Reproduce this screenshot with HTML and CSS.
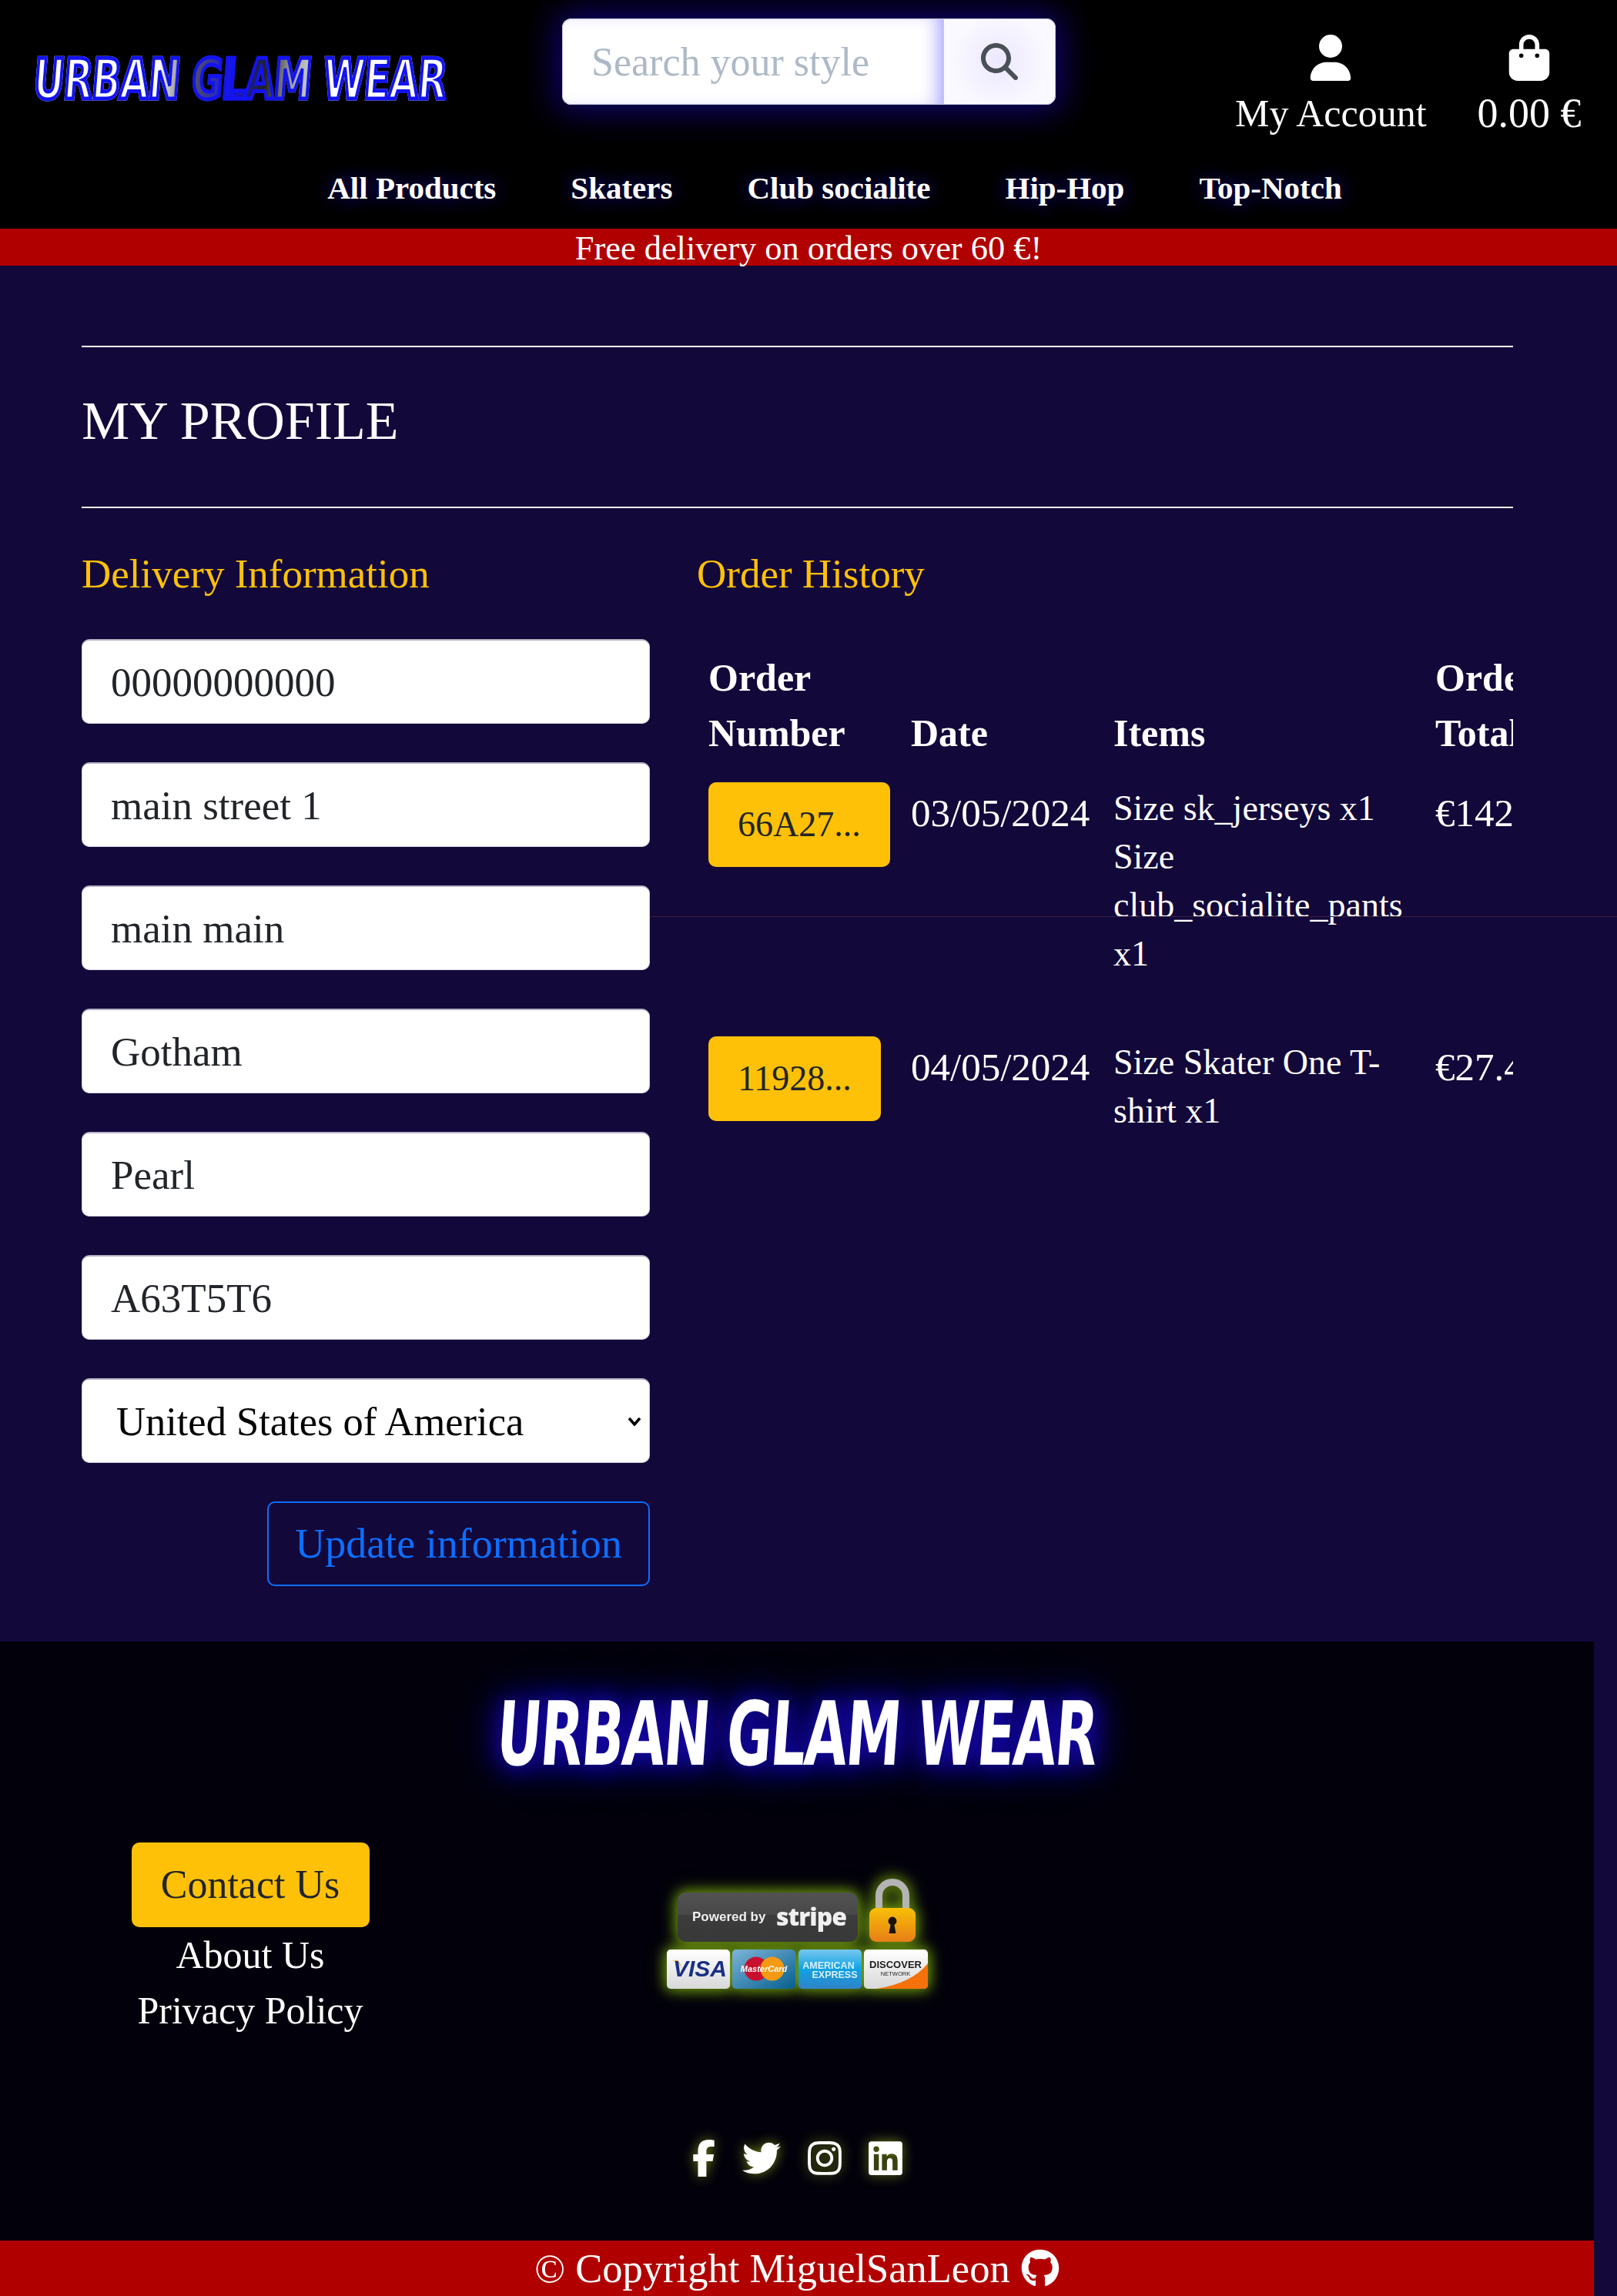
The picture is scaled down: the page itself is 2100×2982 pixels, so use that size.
FILE: index.html
```html
<!DOCTYPE html>
<html lang="en">
<head>
<meta charset="utf-8">
<title>Urban Glam Wear</title>
<link rel="stylesheet" href="styles.css">
</head>
<body>
<header class="site-header">
  <div class="top-row">
    <a class="logo" href="#"><span>URBAN GLAM WEAR</span></a>
    <form class="search">
      <input class="search-input" type="text" placeholder="Search your style">
      <button class="search-btn" type="button" aria-label="Search">
        <svg viewBox="0 0 512 512" width="48" height="48"><path fill="#495057" d="M416 208c0 45.900-14.900 88.300-40 122.700L502.600 457.400c12.500 12.500 12.500 32.800 0 45.300s-32.800 12.500-45.300 0L330.700 376c-34.400 25.200-76.800 40-122.700 40C93.100 416 0 322.900 0 208S93.100 0 208 0S416 93.100 416 208zM208 352a144 144 0 1 0 0-288 144 144 0 1 0 0 288z"/></svg>
      </button>
    </form>
    <div class="account">
      <a class="account-link" href="#">
        <svg viewBox="0 0 448 512" width="54" height="60"><path fill="#fff" d="M224 256A128 128 0 1 0 224 0a128 128 0 1 0 0 256zm-45.700 48C79.800 304 0 383.800 0 482.300C0 498.700 13.300 512 29.700 512H418.300c16.400 0 29.700-13.300 29.700-29.700C448 383.800 368.200 304 269.700 304H178.300z"/></svg>
        <span>My Account</span>
      </a>
      <a class="account-link bag-link" href="#">
        <svg viewBox="0 0 448 512" width="54" height="60"><path fill="#fff" d="M160 112c0-35.300 28.700-64 64-64s64 28.700 64 64v48H160V112zm-48 48H48c-26.500 0-48 21.500-48 48V416c0 53 43 96 96 96H352c53 0 96-43 96-96V208c0-26.500-21.500-48-48-48H336V112C336 50.100 285.900 0 224 0S112 50.100 112 112v48zm24 48a24 24 0 1 1 0 48 24 24 0 1 1 0-48zm152 24a24 24 0 1 1 48 0 24 24 0 1 1-48 0z"/></svg>
        <span>0.00 €</span>
      </a>
    </div>
  </div>
  <nav class="main-nav">
    <a href="#">All Products</a>
    <a href="#">Skaters</a>
    <a href="#">Club socialite</a>
    <a href="#">Hip-Hop</a>
    <a href="#">Top-Notch</a>
  </nav>
</header>
<div class="promo">Free delivery on orders over 60 €!</div>

<main class="profile">
  <div class="title-band">
    <h1>MY PROFILE</h1>
  </div>
  <div class="columns">
    <section class="delivery">
      <h2>Delivery Information</h2>
      <form class="delivery-form">
        <input class="field" type="text" value="00000000000">
        <input class="field" type="text" value="main street 1">
        <input class="field" type="text" value="main main">
        <input class="field" type="text" value="Gotham">
        <input class="field" type="text" value="Pearl">
        <input class="field" type="text" value="A63T5T6">
        <select class="field select-field"><option>United States of America</option></select>
        <button class="update-btn" type="button">Update information</button>
      </form>
    </section>
    <section class="history">
      <h2>Order History</h2>
      <div class="table-wrap">
        <table class="orders">
          <thead>
            <tr><th class="c1">Order Number</th><th class="c2">Date</th><th class="c3">Items</th><th class="c4">Order Total</th></tr>
          </thead>
          <tbody>
            <tr>
              <td><a class="order-btn" href="#">66A27...</a></td>
              <td class="date">03/05/2024</td>
              <td class="items">Size sk_jerseys x1<br>Size club_socialite_pants x1</td>
              <td class="date">€142.50</td>
            </tr>
            <tr>
              <td><a class="order-btn" href="#">11928...</a></td>
              <td class="date">04/05/2024</td>
              <td class="items">Size Skater One T-shirt x1</td>
              <td class="date">€27.40</td>
            </tr>
          </tbody>
        </table>
      </div>
    </section>
  </div>
  <div class="hairline"></div>
</main>

<footer class="site-footer">
  <div class="footer-logo"><span>URBAN GLAM WEAR</span></div>
  <div class="footer-mid">
    <div class="footer-links">
      <a class="contact-btn" href="#">Contact Us</a>
      <a href="#">About Us</a>
      <a href="#">Privacy Policy</a>
    </div>
    <svg class="stripe-badge" viewBox="0 0 340 144" width="340" height="144">
      <defs>
        <linearGradient id="gDark" x1="0" y1="0" x2="0" y2="1"><stop offset="0" stop-color="#525252"/><stop offset=".45" stop-color="#484848"/><stop offset=".46" stop-color="#3c3c3c"/><stop offset="1" stop-color="#383838"/></linearGradient>
        <linearGradient id="gLock" x1="0" y1="0" x2="0" y2="1"><stop offset="0" stop-color="#f8c007"/><stop offset="1" stop-color="#e77e17"/></linearGradient>
        <linearGradient id="gWhite" x1="0" y1="0" x2="0" y2="1"><stop offset="0" stop-color="#fff"/><stop offset="1" stop-color="#d8d8d8"/></linearGradient>
        <linearGradient id="gMc" x1="0" y1="0" x2="1" y2="1"><stop offset="0" stop-color="#7eb5d8"/><stop offset="1" stop-color="#05608f"/></linearGradient>
        <linearGradient id="gAm" x1="0" y1="0" x2="0" y2="1"><stop offset="0" stop-color="#76c8ef"/><stop offset=".5" stop-color="#10a2e2"/><stop offset="1" stop-color="#2f83c9"/></linearGradient>
      </defs>
      <rect x="14" y="18" width="234" height="64" rx="11" fill="url(#gDark)"/>
      <text x="33" y="55" class="st-pow">Powered by</text>
      <text x="142" y="61" class="st-brand">stripe</text>
      <path d="M275.500 42 V22 a17.500 17.500 0 0 1 35 0 V42" fill="none" stroke="#b4b4b4" stroke-width="9"/>
      <rect x="263" y="38" width="60" height="44" rx="9" fill="url(#gLock)"/>
      <path d="M288.500 71 l2-11 a5.500 5.500 0 1 1 5 0 l2 11 z" fill="#1a1208"/>
      <rect x="0" y="92" width="82" height="51" rx="5" fill="url(#gWhite)"/>
      <path d="M6 106 Q16 106 20 118 Q18 110 14 106 z" fill="#f2a51c"/>
      <text x="8" y="127" class="st-visa">VISA</text>
      <rect x="85" y="92" width="82" height="51" rx="5" fill="url(#gMc)"/>
      <circle cx="116" cy="117" r="15.500" fill="#c8102e"/>
      <circle cx="137" cy="117" r="15.500" fill="#f59a11"/>
      <text x="126" y="121" class="st-mc">MasterCard</text>
      <rect x="171" y="92" width="82" height="51" rx="5" fill="url(#gAm)"/>
      <text x="210" y="117" class="st-amex">AMERICAN</text>
      <text x="218" y="129" class="st-amex">EXPRESS</text>
      <rect x="256" y="92" width="83" height="51" rx="5" fill="url(#gWhite)"/>
      <path d="M272 143 Q318 136 339 110 V138 a5 5 0 0 1-5 5 z" fill="#f5720b"/>
      <text x="297" y="116" class="st-disc">DISCOVER</text>
      <text x="297" y="126" class="st-net">NETWORK</text>
    </svg>
  </div>
  <div class="socials">
    <svg class="s-f" viewBox="0 0 320 512"><path fill="#fff" d="M80 299.300V512H196V299.300h86.500l18-97.800H196V166.900c0-51.700 20.300-71.500 72.700-71.500c16.300 0 29.400 .4 37 1.200V7.900C291.400 4 256.400 0 236.200 0C129.300 0 80 50.500 80 159.400v42.100H14v97.800H80z"/></svg>
    <svg class="s-t" viewBox="0 0 512 512"><path fill="#fff" d="M459.370 151.716c.325 4.548 .325 9.097 .325 13.645 0 138.720-105.583 298.558-298.558 298.558-59.452 0-114.680-17.219-161.137-47.106 8.447 .974 16.568 1.299 25.340 1.299 49.055 0 94.213-16.568 130.274-44.832-46.132-.975-84.792-31.188-98.112-72.772 6.498 .974 12.995 1.624 19.818 1.624 9.421 0 18.843-1.300 27.614-3.573-48.081-9.747-84.143-51.980-84.143-102.985v-1.299c13.969 7.797 30.214 12.670 47.431 13.319-28.264-18.843-46.781-51.005-46.781-87.391 0-19.492 5.197-37.360 14.294-52.954 51.655 63.675 129.300 105.258 216.365 109.807-1.624-7.797-2.599-15.918-2.599-24.040 0-57.828 46.782-104.934 104.934-104.934 30.213 0 57.502 12.670 76.670 33.137 23.715-4.548 46.456-13.320 66.599-25.340-7.798 24.366-24.366 44.833-46.132 57.827 21.117-2.273 41.584-8.122 60.426-16.243-14.292 20.791-32.161 39.308-52.628 54.253z"/></svg>
    <svg class="s-i" viewBox="0 0 448 512"><path fill="#fff" d="M224.100 141c-63.600 0-114.900 51.300-114.900 114.900s51.300 114.900 114.900 114.900S339 319.500 339 255.900 287.700 141 224.100 141zm0 189.600c-41.100 0-74.700-33.500-74.700-74.700s33.500-74.700 74.700-74.700 74.700 33.500 74.700 74.700-33.600 74.700-74.700 74.700zm146.400-194.300c0 14.900-12 26.800-26.800 26.800-14.900 0-26.800-12-26.800-26.800s12-26.800 26.800-26.800 26.800 12 26.800 26.800zm76.100 27.200c-1.700-35.900-9.900-67.700-36.200-93.900-26.200-26.200-58-34.400-93.900-36.200-37-2.100-147.900-2.100-184.900 0-35.800 1.700-67.600 9.900-93.900 36.100s-34.400 58-36.200 93.900c-2.100 37-2.100 147.900 0 184.900 1.700 35.900 9.900 67.700 36.200 93.900s58 34.400 93.900 36.200c37 2.100 147.900 2.100 184.900 0 35.900-1.700 67.700-9.900 93.900-36.200 26.200-26.200 34.400-58 36.200-93.900 2.100-37 2.100-147.800 0-184.800zM398.800 388c-7.800 19.600-22.900 34.700-42.600 42.600-29.500 11.700-99.500 9-132.100 9s-102.700 2.600-132.100-9c-19.600-7.800-34.700-22.900-42.600-42.600-11.700-29.500-9-99.500-9-132.100s-2.600-102.700 9-132.100c7.800-19.600 22.900-34.700 42.600-42.600 29.500-11.700 99.500-9 132.100-9s102.700-2.600 132.100 9c19.600 7.800 34.700 22.900 42.600 42.600 11.700 29.500 9 99.500 9 132.100s2.700 102.700-9 132.100z"/></svg>
    <svg class="s-l" viewBox="0 0 448 512"><path fill="#fff" d="M416 32H31.900C14.300 32 0 46.500 0 64.300v383.400C0 465.500 14.300 480 31.900 480H416c17.600 0 32-14.500 32-32.300V64.300c0-17.800-14.400-32.300-32-32.300zM135.400 416H69V202.200h66.500V416zm-33.200-243c-21.300 0-38.500-17.300-38.500-38.500S80.900 96 102.200 96c21.200 0 38.500 17.300 38.500 38.500 0 21.300-17.200 38.500-38.500 38.500zm282.100 243h-66.400V312c0-24.800-.5-56.700-34.500-56.700-34.600 0-39.900 27-39.900 54.900V416h-66.400V202.200h63.700v29.200h.9c8.900-16.800 30.600-34.500 62.900-34.500 67.200 0 79.700 44.300 79.700 101.900V416z"/></svg>
  </div>
  <div class="copyright">
    <span>© Copyright MiguelSanLeon</span>
    <svg viewBox="0 0 496 512" width="50" height="50"><path fill="#fff" d="M165.900 397.400c0 2-2.300 3.600-5.200 3.600-3.300 .3-5.600-1.300-5.600-3.600 0-2 2.300-3.600 5.200-3.600 3-.3 5.600 1.300 5.600 3.600zm-31.100-4.500c-.7 2 1.300 4.300 4.300 4.900 2.600 1 5.600 0 6.200-2s-1.300-4.300-4.300-5.200c-2.600-.7-5.500 .3-6.200 2.300zm44.200-1.700c-2.900 .7-4.900 2.600-4.600 4.900 .3 2 2.900 3.300 5.900 2.600 2.900-.7 4.900-2.600 4.600-4.600-.3-1.900-3-3.200-5.900-2.900zM244.800 8C106.100 8 0 113.300 0 252c0 110.900 69.800 205.800 169.500 239.200 12.800 2.300 17.300-5.600 17.300-12.100 0-6.200-.3-40.400-.3-61.400 0 0-70 15-84.700-29.800 0 0-11.400-29.100-27.800-36.600 0 0-22.900-15.700 1.600-15.400 0 0 24.900 2 38.600 25.800 21.900 38.600 58.600 27.500 72.900 20.900 2.300-16 8.800-27.100 16-33.700-55.900-6.200-112.300-14.300-112.300-110.500 0-27.500 7.600-41.300 23.600-58.900-2.600-6.500-11.100-33.300 2.600-67.900 20.900-6.500 69 27 69 27 20-5.600 41.500-8.500 62.800-8.500s42.800 2.900 62.800 8.500c0 0 48.100-33.600 69-27 13.700 34.700 5.200 61.400 2.600 67.900 16 17.700 25.800 31.500 25.800 58.900 0 96.500-58.900 104.200-114.800 110.500 9.200 7.900 17 22.900 17 46.400 0 33.700-.3 75.400-.3 83.600 0 6.500 4.600 14.400 17.300 12.100C428.200 457.800 496 362.900 496 252 496 113.300 383.500 8 244.800 8z"/></svg>
  </div>
</footer>
</body>
</html>
```
FILE: styles.css
```css
* { box-sizing: border-box; }
html, body { margin: 0; padding: 0; }
body {
  background: #13083a;
  color: #fff;
  font-family: "Liberation Serif", "Times New Roman", serif;
  font-size: 50px;
  line-height: 1.44;
  width: 2100px;
  overflow-x: hidden;
}
a { color: inherit; text-decoration: none; }

/* Header */
.site-header { background: #000; height: 297px; }
.top-row { display: flex; align-items: flex-start; height: 200px; }

.logo {
  display: block;
  flex: none;
  width: 620px;
  padding: 72px 0 0 44px;
  font-family: "DejaVu Sans", sans-serif;
  font-stretch: condensed;
  font-weight: 700;
  font-size: 58px;
  line-height: 62px;
  white-space: nowrap;
}
.logo span {
  display: inline-block;
  -webkit-text-stroke: 4px #1313f0;
  letter-spacing: -1px;
  transform-origin: left center;
  transform: scale(.94, 1.25) skewX(-6deg);
  background: linear-gradient(90deg, #fff 0 30%, #555 38%, #1313f0 48%, #222 56%, #999 62%, #fff 72%);
  -webkit-background-clip: text;
  background-clip: text;
  -webkit-text-fill-color: transparent;
}

.search {
  display: flex;
  flex: none;
  width: 641px;
  height: 112px;
  margin: 24px 0 0 110px;
  border-radius: 12px;
  box-shadow: 0 0 44px 8px #100070;
  background: #fff;
}
.search-input {
  flex: 1;
  min-width: 0;
  height: 112px;
  padding: 0 37px;
  border: 1px solid #c7c6e0;
  border-right: 0;
  border-radius: 12px 0 0 12px;
  font: 52px "Liberation Serif", serif;
  color: #000;
  background: #fff;
  box-shadow: inset -18px 0 26px -14px #9a94ff;
  outline: 0;
}
.search-input::placeholder { color: #adb9c6; opacity: 1; }
.search-btn {
  width: 146px;
  height: 112px;
  padding: 0;
  display: flex;
  align-items: center;
  justify-content: center;
  background: radial-gradient(circle, #ece8ff 0, #faf9ff 70%);
  border: 1px solid #c7c6e0;
  border-radius: 0 12px 12px 0;
}

.account { display: flex; margin-left: 233px; padding-top: 45px; gap: 66px; }
.account-link {
  display: flex;
  flex-direction: column;
  align-items: center;
  line-height: 60px;
  font-size: 50px;
  white-space: nowrap;
}
.account-link svg { margin-bottom: 12px; }
.bag-link { font-size: 54px; }

.main-nav {
  display: flex;
  justify-content: center;
  gap: 97px;
  padding-left: 68px;
  font-weight: 700;
  font-size: 41px;
  line-height: 60px;
  margin-top: 14px;
}
.main-nav a { text-shadow: 0 0 24px #1d0a9c; }

.promo {
  background: #b10000;
  height: 48px;
  text-align: center;
  font-size: 44.4px;
  line-height: 50px;
}

/* Profile */
.profile { height: 1787px; padding: 104px 135px 0 106px; position: relative; }
.title-band {
  height: 211px;
  border-top: 2px solid #fff;
  border-bottom: 2px solid #fff;
  display: flex;
  align-items: center;
}
h1 { margin: 0 0 16px 0; font-size: 70px; font-weight: 400; line-height: 1; }
.columns { display: flex; margin-top: 49px; gap: 61px; }
h2 {
  margin: 0;
  color: #ffc107;
  font-size: 53px;
  font-weight: 400;
  line-height: 72px;
}
.delivery { width: 738px; flex: none; }
.delivery-form { display: flex; flex-direction: column; gap: 50px; margin-top: 49px; }
.field {
  width: 100%;
  height: 110px;
  padding: 0 37px;
  background: #fff;
  color: #212529;
  border: 1px solid #ced4da;
  border-top: 2px solid #b5b3c4;
  border-radius: 10px;
  font: 53px "Liberation Serif", serif;
  outline: 0;
}
.select-field {
  color: #000;
  padding-left: 44px;
  font-size: 52.5px;
  appearance: none;
  background-image: url("data:image/svg+xml,%3Csvg xmlns='http://www.w3.org/2000/svg' viewBox='0 0 18 12'%3E%3Cpath d='M2 2l7 8 7-8' fill='none' stroke='%23000' stroke-width='3.500'/%3E%3C/svg%3E");
  background-repeat: no-repeat;
  background-size: 18px 12px;
  background-position: right 10px center;
}
.update-btn {
  align-self: flex-end;
  width: 497px;
  height: 110px;
  padding: 0;
  background: transparent;
  border: 2px solid #0d6efd;
  border-radius: 10px;
  color: #0d6efd;
  font: 54px "Liberation Serif", serif;
}

.history { flex: 1; min-width: 0; }
.table-wrap { overflow: hidden; margin-top: 63px; }
.orders { table-layout: fixed; width: 1300px; border-collapse: collapse; }
.orders th {
  vertical-align: bottom;
  text-align: left;
  padding: 0 15px 12px;
  font-size: 50px;
  line-height: 72px;
  font-weight: 700;
}
.c1 { width: 263px; }
.c2 { width: 263px; }
.c3 { width: 418px; }
.c4 { width: 356px; }
.orders th.c1 { padding-right: 45px; }
.orders th.c4 { padding-right: 235px; }
.orders td { vertical-align: top; padding: 16px 15px 0; }
.date { padding-top: 20px !important; font-size: 51px; line-height: 72px; }
.items { font-size: 46px; line-height: 63px; padding-top: 18px !important; padding-bottom: 60px !important; }
.order-btn {
  display: inline-block;
  height: 110px;
  padding: 0 38px;
  background: #ffc107;
  border-radius: 10px;
  color: #212529;
  line-height: 110px;
  font-size: 46px;
}
.hairline {
  position: absolute;
  left: 845px;
  right: 0;
  top: 845px;
  height: 1px;
  background: #35203f;
}

/* Footer */
.site-footer { width: 2070px; background: #02000b; height: 850px; text-align: center; }
.footer-logo {
  padding-top: 66px;
  height: 230px;
  font-family: "DejaVu Sans", sans-serif;
  font-stretch: condensed;
  font-weight: 700;
  font-size: 92px;
  line-height: 110px;
}
.footer-logo span {
  display: inline-block;
  white-space: nowrap;
  color: #fff;
  letter-spacing: -2px;
  transform: scale(.867, 1.25) skewX(-6deg);
  text-shadow: 0 0 24px #1608a8, 0 0 40px #1608a8, 0 0 60px #1608a8;
}
.footer-mid { display: flex; height: 406px; padding-top: 31px; }
.footer-links {
  width: 650px;
  margin-top: 0;
  display: flex;
  flex-direction: column;
  align-items: center;
  line-height: 72px;
  font-size: 50px;
}
.contact-btn {
  display: block;
  width: 309px;
  height: 110px;
  margin-bottom: 0;
  background: #ffc107;
  color: #212529;
  border-radius: 10px;
  font-size: 52px;
  line-height: 110px;
}
.stripe-badge {
  margin: 47px 0 0 216px;
  overflow: visible;
  filter: drop-shadow(0 0 9px #6f9a0f) drop-shadow(0 0 8px #3c5208);
}
.st-pow { font: 700 17px "Liberation Sans", sans-serif; fill: #f0f0f0; }
.st-brand { font: 800 32px "Open Sans", sans-serif; fill: #f0f0f0; letter-spacing: -1px; }
.st-visa { font: italic 700 30px "Liberation Sans", sans-serif; fill: #1a2f85; }
.st-mc { font: italic 700 11px "Liberation Sans", sans-serif; fill: #fff; text-anchor: middle; }
.st-amex { font: 700 12.500px "Liberation Sans", sans-serif; fill: #d8f0fb; text-anchor: middle; }
.st-disc { font: 700 13px "Liberation Sans", sans-serif; fill: #1c1c1c; text-anchor: middle; }
.st-net { font: 7.500px "Liberation Sans", sans-serif; fill: #1c1c1c; text-anchor: middle; }

.socials {
  display: flex;
  align-items: center;
  justify-content: center;
  height: 70px;
  gap: 35px;
}
.socials svg { filter: drop-shadow(0 0 8px #6d7f14); }
.s-f { width: 30px; height: 48px; }
.s-t { width: 50px; height: 50px; }
.s-i { width: 44px; height: 50px; }
.s-l { width: 44px; height: 50px; }

.copyright {
  margin-top: 72px;
  height: 72px;
  background: #b10000;
  display: flex;
  align-items: center;
  justify-content: center;
  gap: 14px;
  line-height: 72px;
  font-size: 52.5px;
}
```
